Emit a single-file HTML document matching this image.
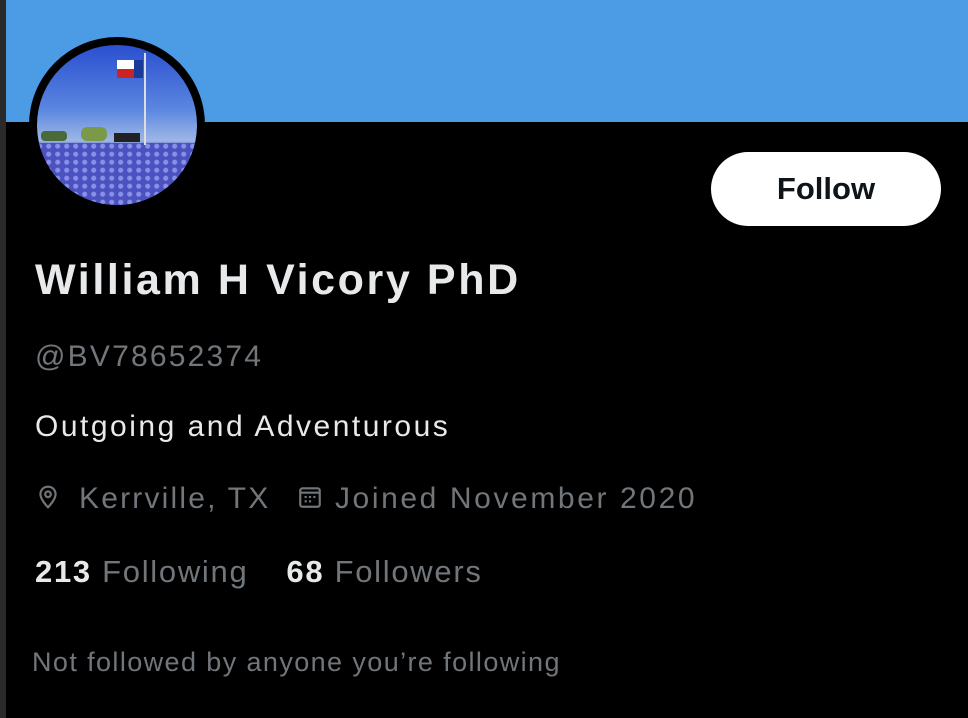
<!DOCTYPE html>
<html><head><meta charset="utf-8"><style>
body{margin:0;width:968px;height:718px;background:#000;overflow:hidden;font-family:"Liberation Sans",sans-serif;position:relative}
.strip{position:absolute;left:0;top:0;width:6px;height:718px;background:#2a2a2a}
.banner{position:absolute;left:6px;top:0;width:962px;height:122px;background:#4b9be5}
.av{position:absolute;left:29px;top:37px;width:176px;height:176px;border-radius:50%;background:#000}
.pic{position:absolute;left:37px;top:45px;width:160px;height:160px;border-radius:50%;overflow:hidden;background:linear-gradient(#2a4fd0 0%,#5a86e0 40%,#9fb7e6 60%,#6e7fd8 62%,#5a63c8 80%,#7a80d8 100%)}
.btn{position:absolute;left:711px;top:152px;width:230px;height:74px;border-radius:37px;background:#fff;color:#0f1419;font-weight:bold;font-size:31px;line-height:74px;text-align:center}
.t{position:absolute;left:35px;white-space:nowrap}
</style></head><body>
<div class="strip"></div><div class="banner"></div>
<div class="av"></div>
<div class="pic">
 <div style="position:absolute;left:0;top:98px;width:160px;height:62px;background:radial-gradient(circle at 30% 40%,#8890e8 0 2px,transparent 3px) 0 0/9px 8px,#4b52c0"></div>
 <div style="position:absolute;left:4px;top:86px;width:26px;height:10px;background:#4a6a3a;border-radius:4px"></div>
 <div style="position:absolute;left:44px;top:82px;width:26px;height:14px;background:#7a9a4a;border-radius:6px"></div>
 <div style="position:absolute;left:77px;top:88px;width:26px;height:9px;background:#222"></div>
 <div style="position:absolute;left:107px;top:8px;width:2px;height:92px;background:#ddd"></div>
 <div style="position:absolute;left:80px;top:15px;width:26px;height:18px;background:linear-gradient(#fff 50%,#c22 50%)"></div>
 <div style="position:absolute;left:97px;top:15px;width:9px;height:18px;background:#1a3a9a"></div>
</div>
<div class="btn">Follow</div>
<div class="t" style="top:256px;font-size:43px;letter-spacing:2.6px;font-weight:bold;color:#e7e9ea">William H Vicory PhD</div>
<div class="t" style="top:340px;font-size:30px;letter-spacing:2.2px;color:#71767b">@BV78652374</div>
<div class="t" style="top:410px;font-size:30px;letter-spacing:2.5px;color:#e7e9ea">Outgoing and Adventurous</div>
<div class="t" style="top:482px;font-size:30px;letter-spacing:2.2px;color:#71767b">
<svg width="26" height="28" viewBox="0 0 24 24" style="vertical-align:-3px;margin-right:18px"><path d="M12 2.5c-4 0-7 3-7 7 0 5 7 12 7 12s7-7 7-12c0-4-3-7-7-7z" fill="none" stroke="#71767b" stroke-width="2"/><circle cx="12" cy="9.5" r="2.6" fill="none" stroke="#71767b" stroke-width="2"/></svg>Kerrville, TX
<svg width="26" height="26" viewBox="0 0 24 24" style="vertical-align:-2px;margin:0 12px 0 16px"><rect x="3" y="4" width="18" height="17" rx="2" fill="none" stroke="#71767b" stroke-width="2"/><path d="M3 8h18" stroke="#71767b" stroke-width="2"/><g fill="#71767b"><rect x="7" y="11" width="2" height="2"/><rect x="11" y="11" width="2" height="2"/><rect x="15" y="11" width="2" height="2"/><rect x="7" y="15" width="2" height="2"/><rect x="11" y="15" width="2" height="2"/></g></svg><span style="letter-spacing:2.6px">Joined November 2020</span></div>
<div class="t" style="top:554px;font-size:31px;letter-spacing:1.7px;color:#71767b"><b style="color:#e7e9ea">213</b> Following<span style="display:inline-block;width:38px"></span><b style="color:#e7e9ea">68</b> Followers</div>
<div class="t" style="left:32px;top:647px;font-size:27px;letter-spacing:1.4px;color:#71767b">Not followed by anyone you’re following</div>
</body></html>
